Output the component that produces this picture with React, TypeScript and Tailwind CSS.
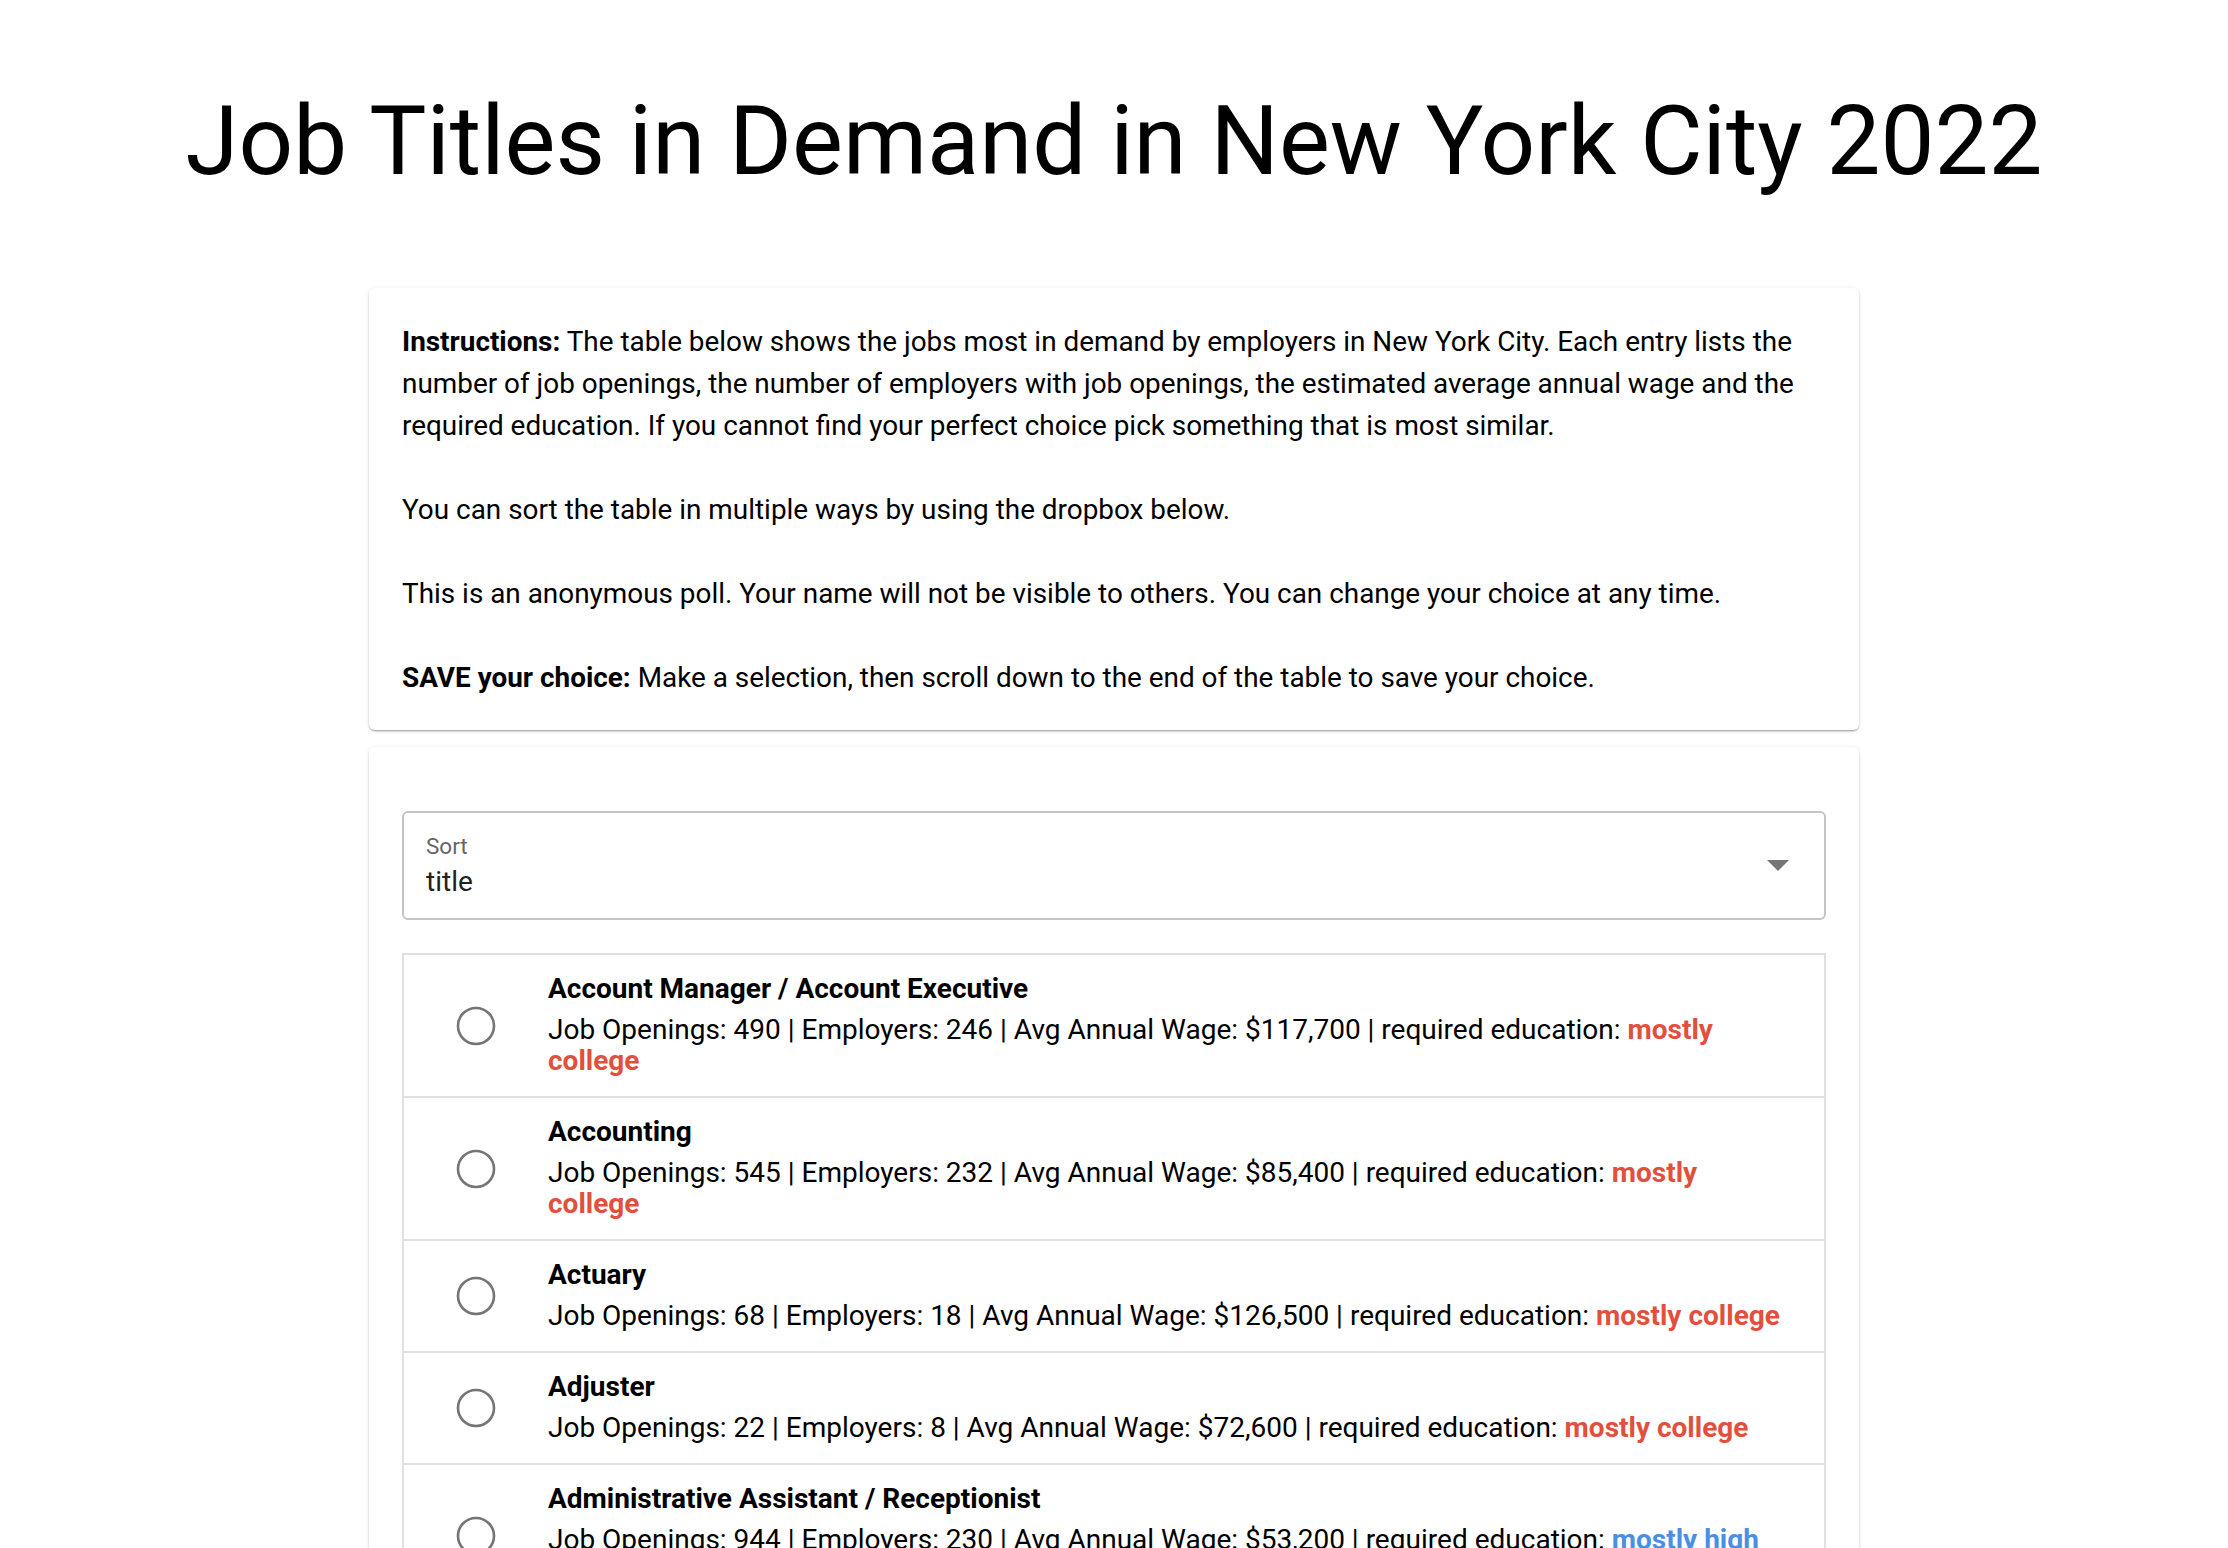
import React from "react";

type Job = {
  title: string;
  openings: number;
  employers: number;
  wage: string;
  education: string;
  level: "college" | "high";
};

const jobs: Job[] = [
  { title: "Account Manager / Account Executive", openings: 490, employers: 246, wage: "$117,700", education: "mostly college", level: "college" },
  { title: "Accounting", openings: 545, employers: 232, wage: "$85,400", education: "mostly college", level: "college" },
  { title: "Actuary", openings: 68, employers: 18, wage: "$126,500", education: "mostly college", level: "college" },
  { title: "Adjuster", openings: 22, employers: 8, wage: "$72,600", education: "mostly college", level: "college" },
  { title: "Administrative Assistant / Receptionist", openings: 944, employers: 230, wage: "$53,200", education: "mostly high school", level: "high" },
  { title: "Advertising Sales Agent", openings: 112, employers: 64, wage: "$98,300", education: "mostly college", level: "college" },
  { title: "Aircraft Mechanic", openings: 41, employers: 12, wage: "$74,900", education: "mostly high school", level: "high" },
];

function Radio() {
  return (
    <svg width="40" height="40" viewBox="0 0 40 40" className="block">
      <circle cx="20" cy="20" r="18" fill="none" stroke="#757575" strokeWidth="2.6" />
    </svg>
  );
}

function JobRow({ job, first }: { job: Job; first: boolean }) {
  return (
    <div className={`flex items-center ${first ? "" : "border-t-2 border-[#e0e0e0]"}`}>
      <div className="w-[144px] shrink-0 flex justify-center">
        <Radio />
      </div>
      <div className="flex-1 pr-[37px] pt-[15px] pb-[20px]">
        <div className="text-[28px] leading-[38px] font-bold text-black">{job.title}</div>
        <div className="mt-[6px] text-[28px] leading-[31px] text-black">
          Job Openings: {job.openings} | Employers: {job.employers} | Avg Annual Wage: {job.wage} | required
          education:{" "}
          <span className={`font-bold ${job.level === "college" ? "text-[#e2503d]" : "text-[#4a90e2]"}`}>
            {job.education}
          </span>
        </div>
      </div>
    </div>
  );
}

export default function App() {
  return (
    <div className="min-h-screen bg-white font-['Roboto','Liberation_Sans',sans-serif] text-black pb-20">
      <h1 className="pt-[84px] text-center text-[96px] leading-[115px] font-normal">
        Job Titles in Demand in New York City 2022
      </h1>

      <section className="mt-[89px] mx-auto w-[1490px] rounded-md bg-white px-[33px] pt-[33px] pb-[31px] shadow-[0_2px_2px_-1px_rgba(0,0,0,0.25),0_1px_2px_0_rgba(0,0,0,0.12),0_1px_5px_0_rgba(0,0,0,0.1)]">
        <p className="text-[27.9px] leading-[42px]">
          <b>Instructions:</b> The table below shows the jobs most in demand by employers in New York City. Each
          entry lists the number of job openings, the number of employers with job openings, the estimated average
          annual wage and the required education. If you cannot find your perfect choice pick something that is most
          similar.
          <br />
          <br />
          You can sort the table in multiple ways by using the dropbox below.
          <br />
          <br />
          This is an anonymous poll. Your name will not be visible to others. You can change your choice at any time.
          <br />
          <br />
          <b>SAVE your choice:</b> Make a selection, then scroll down to the end of the table to save your choice.
        </p>
      </section>

      <section className="mt-[17px] mx-auto w-[1490px] rounded-md bg-white px-[33px] pt-[64px] pb-[40px] shadow-[0_2px_2px_-1px_rgba(0,0,0,0.25),0_1px_2px_0_rgba(0,0,0,0.12),0_1px_5px_0_rgba(0,0,0,0.1)]">
        <div className="flex h-[109px] items-center rounded-md border-2 border-[#c4c4c4] pl-[22px] pr-[35px]">
          <div className="flex-1">
            <div className="text-[22.5px] leading-[24px] text-[#666]">Sort</div>
            <div className="mt-[9px] text-[28px] leading-[30px] text-[#222]">title</div>
          </div>
          <svg width="22" height="11" viewBox="0 0 22 11" className="block">
            <path d="M0 0 L22 0 L11 11 Z" fill="#757575" />
          </svg>
        </div>

        <div className="mt-[33px] border-2 border-[#e0e0e0]">
          {jobs.map((job, i) => (
            <JobRow key={job.title} job={job} first={i === 0} />
          ))}
        </div>
      </section>
    </div>
  );
}
